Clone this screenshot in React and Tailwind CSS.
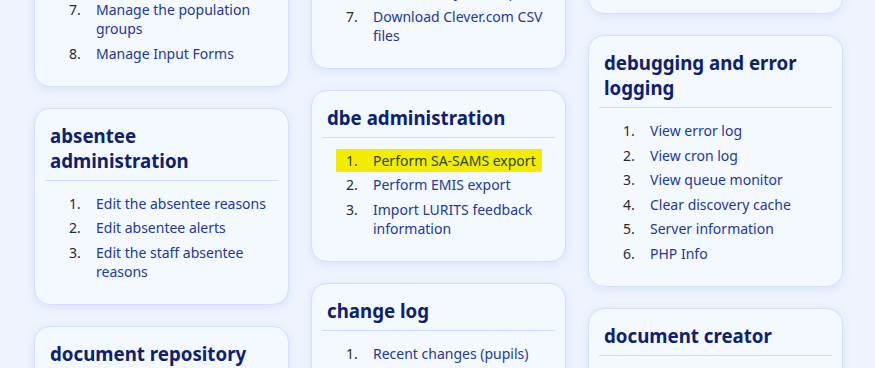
const FONT = { fontFamily: '"Noto Sans", "Open Sans", sans-serif' };

const Item = ({ n, text, highlight }) => (
  <li
    className={
      highlight
        ? 'flex w-fit py-[2px] pl-[10px] pr-[6px] leading-[19px] bg-[#f3eb00] text-[#1f4a0c]'
        : 'flex py-[2px] pl-[10px] pr-[6px] leading-[19px]'
    }
  >
    <span className={highlight ? 'w-[27px] shrink-0' : 'w-[27px] shrink-0 text-[#2a2a2a]'}>{n}.</span>
    <span className={highlight ? '' : 'text-[#21399b]'}>{text}</span>
  </li>
);

const Card = ({ title, items = [], start = 1, highlightIndex = -1, className = '' }) => (
  <div
    className={
      'rounded-2xl border border-[#d3e0fa] bg-[#f4f8ff] p-[10px] shadow-[0_2px_8px_rgba(70,120,230,0.13)] ' +
      className
    }
  >
    {title && (
      <h3 className="border-b border-[#cfdcf5] px-[5px] pt-[4px] pb-[7px] text-[18.7px] font-bold leading-[25px] text-[#0c2170]">
        {title}
      </h3>
    )}
    {items.length > 0 && (
      <ol className="my-[11px] flex flex-col gap-[1.6px] pl-[14px] text-[14px]">
        {items.map((text, i) => (
          <Item key={text} n={start + i} text={text} highlight={i === highlightIndex} />
        ))}
      </ol>
    )}
  </div>
);

export default function App() {
  return (
    <div className="h-[368px] w-[875px] overflow-hidden bg-[#eef3fd]" style={FONT}>
      <div className="flex items-start gap-[22px] pl-[34px]">
        <div className="-mt-[24px] flex w-[255px] flex-col gap-[21px]">
          <Card start={7} items={['Manage the population groups', 'Manage Input Forms']} />
          <Card
            title="absentee administration"
            items={['Edit the absentee reasons', 'Edit absentee alerts', 'Edit the staff absentee reasons']}
          />
          <Card title="document repository" items={['Browse the document repository', 'Upload documents']} />
        </div>

        <div className="-mt-[42px] flex w-[255px] flex-col gap-[21px]">
          <Card start={6} items={['Clever.com sync setup', 'Download Clever.com CSV files']} />
          <Card
            title="dbe administration"
            highlightIndex={0}
            items={['Perform SA-SAMS export', 'Perform EMIS export', 'Import LURITS feedback information']}
          />
          <Card title="change log" items={['Recent changes (pupils)', 'Recent changes (staff)']} />
        </div>

        <div className="-mt-[26px] flex w-[255px] flex-col gap-[21px]">
          <Card className="h-[40px]" />
          <Card
            title="debugging and error logging"
            items={[
              'View error log',
              'View cron log',
              'View queue monitor',
              'Clear discovery cache',
              'Server information',
              'PHP Info',
            ]}
          />
          <Card title="document creator" items={['Create a document', 'Edit templates']} />
        </div>
      </div>
    </div>
  );
}
